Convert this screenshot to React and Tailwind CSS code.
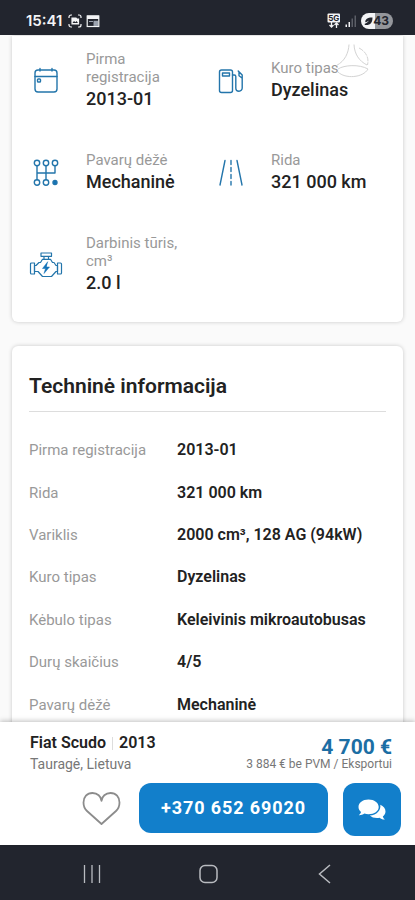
import React from 'react';

const SPECS = [
    { label: 'Pirma registracija', value: '2013-01', icon: CalendarIcon },
    { label: 'Kuro tipas', value: 'Dyzelinas', icon: FuelIcon },
    { label: 'Pavarų dėžė', value: 'Mechaninė', icon: GearboxIcon },
    { label: 'Rida', value: '321 000 km', icon: RoadIcon },
    { label: 'Darbinis tūris, cm³', value: '2.0 l', icon: EngineIcon },
];

const DETAILS = [
    ['Pirma registracija', '2013-01'],
    ['Rida', '321 000 km'],
    ['Variklis', '2000 cm³, 128 AG (94kW)'],
    ['Kuro tipas', 'Dyzelinas'],
    ['Kėbulo tipas', 'Keleivinis mikroautobusas'],
    ['Durų skaičius', '4/5'],
    ['Pavarų dėžė', 'Mechaninė'],
];

function SpecSvg({ children }) {
    return (
        <svg viewBox="0 0 34 34" className="w-[34px] h-[34px] shrink-0" fill="none" stroke="#2375ab" strokeWidth="1.4" strokeLinecap="round" strokeLinejoin="round">
            {children}
        </svg>
    );
}

function CalendarIcon() {
    return (
        <SpecSvg>
            <rect x="6" y="6" width="22" height="22" rx="3" />
            <path d="M6 12.5h22M11 4.5v2.5M23 4.5v2.5" />
            <rect x="8.5" y="15" width="3" height="3" rx="0.8" />
        </SpecSvg>
    );
}

function FuelIcon() {
    return (
        <SpecSvg>
            <rect x="5.5" y="6" width="13" height="22.5" rx="2" />
            <path d="M8.5 9h7v3h-7z" />
            <path d="M18.5 11h1.8a1.5 1.5 0 0 1 1.5 1.5v11.5a3.2 3.2 0 0 0 6.4 0V11l-4-4M25 8v3.8l3 2.2" />
        </SpecSvg>
    );
}

function GearboxIcon() {
    return (
        <SpecSvg>
            <circle cx="8" cy="7" r="2.7" />
            <circle cx="17" cy="7" r="2.7" />
            <circle cx="26" cy="7" r="2.7" />
            <circle cx="8" cy="26.5" r="2.7" />
            <circle cx="17" cy="26.5" r="2.7" />
            <circle cx="26" cy="26.5" r="2" fill="#1273b8" />
            <path d="M8 9.7v14.1M17 9.7v14.1M26 9.7V17H8" />
        </SpecSvg>
    );
}

function RoadIcon() {
    return (
        <SpecSvg>
            <path d="M11 4.5 6 29M23 4.5 28 29" />
            <path d="M17 4.5v4M17 11.5v4M17 18.5v4M17 25.5v3.5" />
        </SpecSvg>
    );
}

function EngineIcon() {
    return (
        <SpecSvg>
            <g strokeWidth="1.2">
                <path d="M12 5h10.5v3.3H12zM15 8.3v3M19.5 8.3v3" />
                <path d="M5.5 17.500H7l3-3h1.5l2-3.200h8l2 3.200H25l2 3h1.500v6H27l-4.500 5h-9L9 23.500H5.500z" />
                <path d="M5.500 15h-3q-1 0-1 1v9q0 1 1 1h3zM28.500 15h3q1 0 1 1v9q0 1-1 1h-3z" />
            </g>
            <path d="m18.500 14-5 6.500h3L15 25.500l5.500-6.500h-3z" fill="#1273b8" stroke="#1273b8" strokeWidth="0.5" />
        </SpecSvg>
    );
}

function StatusBar() {
    return (
        <header className="h-[35px] shrink-0 flex items-center justify-between pl-[26px] pr-[22px] pt-[7px] bg-[#22252e] text-gray-100">
            <div className="flex items-center gap-[6px]">
                <span className="font-['Inter'] text-[15px] leading-[18px] font-semibold">15:41</span>
                <svg viewBox="0 0 14 14" className="w-[14px] h-[14px]" fill="none" stroke="#f3f4f6" strokeWidth="1.2">
                    <path d="M1 4V3a2 2 0 0 1 2-2h1M10 1h1a2 2 0 0 1 2 2v1M13 10v1a2 2 0 0 1-2 2h-1M4 13H3a2 2 0 0 1-2-2v-1" />
                    <path d="M4 4h4l.8 1h1.7v5H4z" fill="#f3f4f6" />
                    <path d="m4.500 9 1.500-2 1.300 1.200L8.500 7l1.500 2z" fill="#22252e" stroke="none" />
                </svg>
                <svg viewBox="0 0 14 14" className="w-[14px] h-[14px] -ml-[2px]">
                    <rect x="1.2" y="2" width="11.6" height="10.5" fill="none" stroke="#f3f4f6" strokeWidth="1.2" />
                    <path d="M1 1.5h12V5H1z" fill="#f3f4f6" />
                    <path d="M3 7.5h4" stroke="#9ca3af" />
                    <path d="M7.5 6.8H12V12H7.500z" fill="#9ca3af" />
                </svg>
            </div>
            <div className="flex items-center gap-[4px]">
                <svg viewBox="0 0 14 16" className="w-[14px] h-[16px]">
                    <rect x="0.5" y="0.5" width="12.5" height="9" rx="1" fill="#f3f4f6" />
                    <text x="6.7" y="8" fontSize="8" fontWeight="700" textAnchor="middle" fontFamily="Inter, sans-serif" fill="#22252e">5G</text>
                    <path d="M4.500 9v5M2.500 12l2 2 2-2M9.500 15v-5M7.500 12l2-2 2 2" fill="none" stroke="#f3f4f6" strokeWidth="1.3" />
                </svg>
                <svg viewBox="0 0 12 12" className="w-[12px] h-[12px]">
                    <path d="M0.500 9.500H2V12H0.500zM3.500 7H5v5H3.500z" fill="#f3f4f6" />
                    <path d="M6.500 3.500H8V12H6.500zM9.500 0.500H11V12H9.500z" fill="#5b5e66" />
                </svg>
                <div className="flex items-center h-[16px] rounded-full pl-[3px] pr-[4px] text-[#22252e] bg-[linear-gradient(90deg,#f3f4f6_43%,#94969b_43%)]">
                    <svg viewBox="0 0 9 9" className="w-[9px] h-[9px]">
                        <path d="M8.500 0.500C4 0.300 1 2 1.300 5.300 3 5 4 4.300 5.200 3.300 4 5.300 2.500 6.300 0.500 7l0.500 1C6.500 8.500 8.500 5.500 8.500 0.500z" fill="#22252e" />
                    </svg>
                    <span className="font-['Inter'] text-[12px] leading-[16px] font-bold">43</span>
                </div>
            </div>
        </header>
    );
}

// floating assistive button that hovers above the page
function FloatingMark() {
    return (
        <svg viewBox="0 0 36 36" className="absolute right-[45px] top-[7px] w-[36px] h-[36px]" fill="none" stroke="#d3d3d3" strokeWidth="1">
            <path d="M15 2.500C14.500 11 11 19 2.500 23.500M20 2.500C20.500 12 25 19 33 23" />
            <path d="M25 6C31 9 35.500 15 33.500 23" strokeDasharray="5 1" />
            <path d="M4 27C10 23 25 22 34 27C29 36 11 37 4 30" />
        </svg>
    );
}

function SpecCard() {
    return (
        <section className="mx-3 mt-px rounded-b-md bg-white shadow-[0_0_4px_rgba(0,0,0,0.2)] grid grid-cols-[185px_1fr] gap-y-[39px] items-center pl-[17px] pt-[14px] pb-[26px]">
            {SPECS.map(({ label, value, icon: Icon }) => (
                <dl key={label} className="flex items-center gap-[23px]">
                    <Icon />
                    <div className="w-[104px]">
                        <dt className="text-[15px] leading-[18px] text-[#999]">{label}</dt>
                        <dd className="text-[18px] leading-[26px] font-medium text-[#222] whitespace-nowrap">{value}</dd>
                    </div>
                </dl>
            ))}
        </section>
    );
}

function TechCard() {
    return (
        <section className="mx-3 mt-6 rounded-md bg-white shadow-[0_0_4px_rgba(0,0,0,0.2)] px-[17px] pt-[26px] pb-6">
            <h2 className="text-[21px] leading-[28px] font-semibold text-[#222] pb-[11px] border-b border-[#ddd]">Techninė informacija</h2>
            <table className="mt-[17px] w-full h-[297px] table-fixed text-left">
                <tbody>
                    {DETAILS.map(([name, value]) => (
                        <tr key={name}>
                            <th scope="row" className="w-[148px] p-0 text-[15px] leading-[20px] font-normal text-[#999]">{name}</th>
                            <td className="p-0 text-[16px] leading-[20px] font-semibold text-[#222]">{value}</td>
                        </tr>
                    ))}
                </tbody>
            </table>
        </section>
    );
}

function ContactBar() {
    return (
        <div className="relative shrink-0 bg-white shadow-[0_-1px_5px_rgba(0,0,0,0.25)] pt-[11px] pb-[9px]">
            <div className="flex justify-between pl-[30px] pr-[23px]">
                <div>
                    <div className="flex items-center text-[16px] leading-[20px] font-semibold text-[#222]">
                        <span>Fiat Scudo</span>
                        <span className="mx-[6px] w-px h-[13px] bg-[#ddd]" />
                        <span>2013</span>
                    </div>
                    <div className="text-[14px] leading-[22px] text-[#777]">Tauragė, Lietuva</div>
                </div>
                <div className="text-right pt-[3px]">
                    <div className="text-[21px] leading-[22px] font-bold text-[#1c6ea4]">4 700 €</div>
                    <div className="text-[12px] leading-[12px] text-[#777]">3 884 € be PVM / Eksportui</div>
                </div>
            </div>
            <div className="flex items-start mt-[8px] pl-[82px] pr-[14px]">
                <button type="button" aria-label="Įsiminti" className="mt-[8px] mr-[18px] shrink-0">
                    <svg viewBox="0 0 39 35" className="w-[39px] h-[35px]" fill="none" stroke="#8c8c8c" strokeWidth="1.8" strokeLinejoin="round">
                        <path d="M19.500 33 5 20C2.500 17.700 1.500 15 1.500 11.500 1.500 6 5 2 10.500 2c5 0 8.500 3.500 9 7.800C20 5.500 23.500 2 28.500 2c5.500 0 9 4 9 9.500 0 3.500-1 6.200-3.500 8.500z" />
                    </svg>
                </button>
                <a href="tel:+37065269020" className="flex-1 h-[50px] rounded-[12px] bg-[#127fcb] text-white text-[18px] leading-[50px] font-bold tracking-wider text-center whitespace-nowrap">
                    +370 652 69020
                </a>
                <button type="button" aria-label="Rašyti žinutę" className="ml-[15px] w-[58px] h-[53px] shrink-0 rounded-[12px] bg-[#127fcb] flex items-center justify-center">
                    <svg viewBox="0 0 28 22" className="w-[28px] h-[22px]" fill="#fff">
                        <path d="M10.500 0.500C4.700 0.500 0.500 3.700 0.500 8c0 2 1 3.800 2.600 5.100-.4 1.300-1.200 2.300-2.300 3.200 2.100.1 4-.5 5.600-1.700 1.300.4 2.600.6 4.100.6 5.800 0 10.200-3 10.200-7.200S16.300.5 10.500.5z" />
                        <path d="M22.300 5.800c.9 5.800-3.600 10.200-10.500 10.800 1.700 1.700 4.300 2.500 7.200 2.500.9 0 1.800-.1 2.600-.3 1.500 1.300 3.300 1.900 5.300 1.700-1.100-.8-1.800-1.800-2.100-3 1.600-1.200 2.700-2.900 2.700-5 0-2.900-2-5.500-5.200-6.700z" />
                    </svg>
                </button>
            </div>
        </div>
    );
}

function NavBar() {
    return (
        <nav className="h-[55px] shrink-0 bg-[#22252e] flex items-center justify-between pl-[82px] pr-[80px] pt-[2px]">
            <button type="button" aria-label="Programos">
                <svg viewBox="0 0 20 20" className="w-[20px] h-[20px]" stroke="#b9bbc0" strokeWidth="1.3">
                    <path d="M2.500 1v18M10 1v18M17.500 1v18" />
                </svg>
            </button>
            <button type="button" aria-label="Pradžia">
                <svg viewBox="0 0 20 20" className="w-[20px] h-[20px]" fill="none" stroke="#b9bbc0" strokeWidth="1.5">
                    <rect x="1" y="1.500" width="17" height="17" rx="5" />
                </svg>
            </button>
            <button type="button" aria-label="Atgal">
                <svg viewBox="0 0 20 20" className="w-[20px] h-[20px]" fill="none" stroke="#b9bbc0" strokeWidth="1.5">
                    <path d="M15 1 4.500 10 15 19" />
                </svg>
            </button>
        </nav>
    );
}

export default function App() {
    return (
        <div className="h-screen flex flex-col bg-[#fafafa] font-['Roboto',sans-serif]">
            <StatusBar />
            <main className="relative flex-1 min-h-0 overflow-hidden">
                <SpecCard />
                <TechCard />
                <FloatingMark />
            </main>
            <ContactBar />
            <NavBar />
        </div>
    );
}
